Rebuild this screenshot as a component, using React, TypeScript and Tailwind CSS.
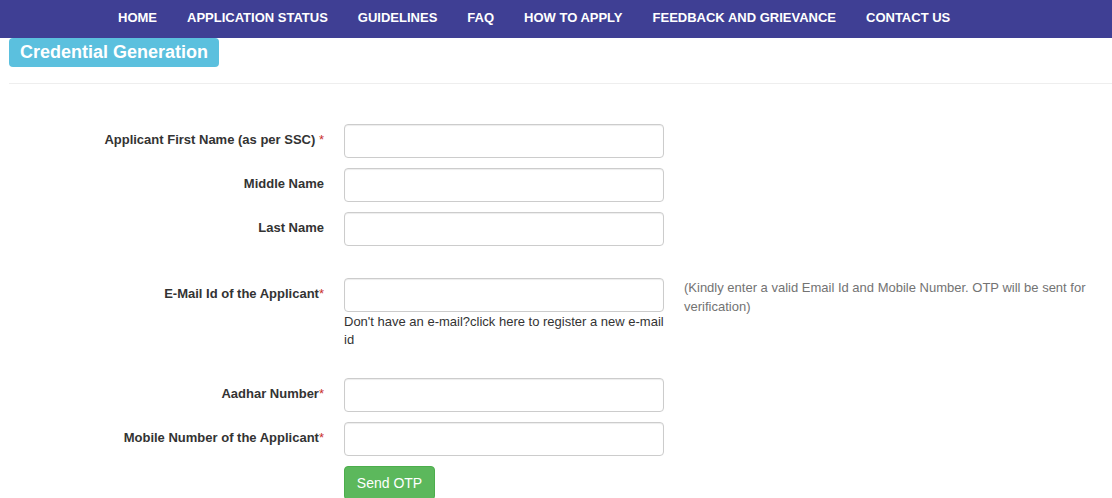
const navItems = [
  "HOME",
  "APPLICATION STATUS",
  "GUIDELINES",
  "FAQ",
  "HOW TO APPLY",
  "FEEDBACK AND GRIEVANCE",
  "CONTACT US",
];

const Req = () => <span className="text-[#c9302c] font-normal">*</span>;

const Field = ({ label, children }: { label: React.ReactNode; children?: React.ReactNode }) => (
  <div className="flex items-start">
    <label className="w-[324px] shrink-0 pt-[6px] text-right text-[13px] font-bold text-[#333]">{label}</label>
    <div className="ml-[20px] w-[320px] shrink-0">
      <input className="block h-[34px] w-full rounded-[4px] border border-[#ccc] bg-white px-3 shadow-[inset_0_1px_1px_rgba(0,0,0,0.075)] outline-none" />
      {children}
    </div>
  </div>
);

export default function App() {
  return (
    <div className="min-h-[498px] bg-white font-['Liberation_Sans',Arial,sans-serif] text-[#333]">
      {/* top nav */}
      <nav className="flex h-[38px] items-center gap-[30px] bg-[#3f3f94] pb-[2px] pl-[118px]">
        {navItems.map((item) => (
          <a key={item} className="text-[13px] font-bold text-white">
            {item}
          </a>
        ))}
      </nav>

      <div className="pl-[9px]">
        <div className="inline-block rounded-[4px] bg-[#5bc0de] px-[11px] py-[3px] text-[18px] font-bold leading-[23px] text-white">
          Credential Generation
        </div>
        <hr className="mt-[16px] border-t border-[#eee]" />
      </div>

      <form className="mt-[40px] flex flex-col">
        <div className="flex flex-col gap-[10px]">
          <Field label={<>Applicant First Name (as per SSC) <Req /></>} />
          <Field label="Middle Name" />
          <Field label="Last Name" />
        </div>

        <div className="mt-[32px] flex items-start">
          <Field label={<>E-Mail Id of the Applicant<Req /></>}>
            <p className="mt-[1px] text-[13px] leading-[18px] text-[#333]">
              Don't have an e-mail?click here to register a new e-mail id
            </p>
          </Field>
          <p className="ml-[20px] w-[420px] text-[13px] leading-[19px] text-[#737373]">
            (Kindly enter a valid Email Id and Mobile Number. OTP will be sent for verification)
          </p>
        </div>

        <div className="mt-[29px] flex flex-col gap-[10px]">
          <Field label={<>Aadhar Number<Req /></>} />
          <Field label={<>Mobile Number of the Applicant<Req /></>} />
          <div className="ml-[344px]">
            <button
              type="button"
              className="h-[34px] w-[91px] rounded-[4px] border border-[#4cae4c] bg-[#5cb85c] text-[14px] text-white"
            >
              Send OTP
            </button>
          </div>
        </div>
      </form>
    </div>
  );
}
